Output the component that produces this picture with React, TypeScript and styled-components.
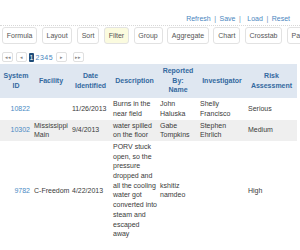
import React from "react";
import styled, { createGlobalStyle } from "styled-components";

const Global = createGlobalStyle`
  html, body { margin: 0; padding: 0; background: #fff; }
  body { font-family: "Liberation Sans", Arial, sans-serif; font-size: 7px; color: #333; overflow: hidden; width: 300px; height: 250px; }
`;

const Page = styled.div`
  width: 300px;
  display: flex;
  flex-direction: column;
  overflow: hidden;
`;

const LinkBar = styled.div`
  height: 13px;
  margin-top: 12px;
  padding-right: 10px;
  display: flex;
  justify-content: flex-end;
  align-items: center;
  gap: 3.5px;
  color: #4a86c0;
  border-bottom: 1px dotted #d8d8d8;
`;

const TopLink = styled.span`
  color: #4a86c0;
`;

const Sep = styled.span<{ $wide?: boolean }>`
  color: #6a8fb5;
  margin-right: ${(p) => (p.$wide ? "3px" : "0")};
`;

const Toolbar = styled.div`
  display: flex;
  gap: 4.5px;
  padding: 1px 0 0 2px;
  white-space: nowrap;
`;

const ToolButton = styled.div<{ $active?: boolean }>`
  flex: none;
  height: 15px;
  padding: 0 3.8px;
  display: flex;
  align-items: center;
  border: 1px solid #e2e2e2;
  border-radius: 3px;
  background: ${(p) => (p.$active ? "#fbfbdf" : "#fff")};
  color: #555;
`;

const Pager = styled.div`
  display: flex;
  align-items: center;
  gap: 3px;
  margin: 8px 0 0 2px;
  height: 10px;
`;

const PageButton = styled.div<{ $gap?: number }>`
  width: 9px;
  height: 8px;
  border: 1px solid #e0e0e0;
  border-radius: 2px;
  display: flex;
  align-items: center;
  justify-content: center;
  font-size: 5px;
  color: #888;
  margin-right: ${(p) => p.$gap ?? 0}px;
`;

const PageNumbers = styled.div`
  display: flex;
  align-items: center;
  gap: 0.5px;
  font-size: 7px;
  color: #4a86c0;
  margin-left: -1px;
`;

const CurrentPage = styled.span`
  display: inline-block;
  width: 5px;
  height: 9px;
  line-height: 9px;
  text-align: center;
  background: #1f4d7a;
  color: #fff;
  border-radius: 1px;
  margin-right: 1px;
`;

const Table = styled.table`
  margin-top: 2px;
  width: 297px;
  border-collapse: collapse;
  table-layout: fixed;
  line-height: 9.7px;
`;

const Th = styled.th`
  background: #dfe7f1;
  color: #3469a0;
  font-weight: bold;
  text-align: center;
  vertical-align: middle;
  padding: 2px 1px 3px;
  height: 29px;
  white-space: nowrap;
`;

const Row = styled.tr<{ $shaded?: boolean }>`
  background: ${(p) => (p.$shaded ? "#efefef" : "#fff")};
`;

const Td = styled.td<{ $align?: string }>`
  padding: 1px 2px;
  vertical-align: middle;
  text-align: ${(p) => p.$align ?? "left"};
  color: #3a3a3a;
  white-space: nowrap;
  overflow: visible;
`;

const IdLink = styled.span`
  color: #4a8ac4;
`;

const widths = [32, 38, 41, 47, 40, 48, 51];

type Rec = {
  id: string;
  facility: string[];
  date: string;
  desc: string[];
  reported: string[];
  investigator: string[];
  risk: string;
};

const rows: Rec[] = [
  {
    id: "10822",
    facility: [],
    date: "11/26/2013",
    desc: ["Burns in the", "near field"],
    reported: ["John", "Haluska"],
    investigator: ["Shelly", "Francisco"],
    risk: "Serious",
  },
  {
    id: "10302",
    facility: ["Mississippi", "Main"],
    date: "9/4/2013",
    desc: ["water spilled", "on the floor"],
    reported: ["Gabe", "Tompkins"],
    investigator: ["Stephen", "Ehrlich"],
    risk: "Medium",
  },
  {
    id: "9782",
    facility: ["C-Freedom"],
    date: "4/22/2013",
    desc: [
      "PORV stuck",
      "open, so the",
      "pressure",
      "dropped and",
      "all the cooling",
      "water got",
      "converted into",
      "steam and",
      "escaped",
      "away",
    ],
    reported: ["kshitiz", "namdeo"],
    investigator: [],
    risk: "High",
  },
];

const Lines = ({ lines }: { lines: string[] }) => (
  <>
    {lines.map((l, i) => (
      <React.Fragment key={i}>
        {i > 0 && <br />}
        {l}
      </React.Fragment>
    ))}
  </>
);

const headers = [
  ["System", "ID"],
  ["Facility"],
  ["Date", "Identified"],
  ["Description"],
  ["Reported", "By:", "Name"],
  ["Investigator"],
  ["Risk", "Assessment"],
];

const tools = ["Formula", "Layout", "Sort", "Filter", "Group", "Aggregate", "Chart", "Crosstab", "Page"];

export default function App() {
  return (
    <Page>
      <Global />
      <LinkBar>
        <TopLink>Refresh</TopLink>
        <Sep>|</Sep>
        <TopLink>Save</TopLink>
        <Sep $wide>|</Sep>
        <TopLink>Load</TopLink>
        <Sep>|</Sep>
        <TopLink>Reset</TopLink>
      </LinkBar>
      <Toolbar>
        {tools.map((t) => (
          <ToolButton key={t} $active={t === "Filter"}>
            {t}
          </ToolButton>
        ))}
      </Toolbar>
      <Pager>
        <PageButton>◂◂</PageButton>
        <PageButton>◂</PageButton>
        <PageNumbers>
          <CurrentPage>1</CurrentPage>
          <span>2</span>
          <span>3</span>
          <span>4</span>
          <span>5</span>
        </PageNumbers>
        <PageButton $gap={3}>▸</PageButton>
        <PageButton>▸▸</PageButton>
      </Pager>
      <Table>
        <colgroup>
          {widths.map((w, i) => (
            <col key={i} style={{ width: w }} />
          ))}
        </colgroup>
        <thead>
          <tr>
            {headers.map((h, i) => (
              <Th key={i}>
                <Lines lines={h} />
              </Th>
            ))}
          </tr>
        </thead>
        <tbody>
          {rows.map((r, i) => (
            <Row key={r.id} $shaded={i === 1}>
              <Td $align="right">
                <IdLink>{r.id}</IdLink>
              </Td>
              <Td>
                <Lines lines={r.facility} />
              </Td>
              <Td>{r.date}</Td>
              <Td>
                <Lines lines={r.desc} />
              </Td>
              <Td>
                <Lines lines={r.reported} />
              </Td>
              <Td>
                <Lines lines={r.investigator} />
              </Td>
              <Td>{r.risk}</Td>
            </Row>
          ))}
        </tbody>
      </Table>
    </Page>
  );
}
